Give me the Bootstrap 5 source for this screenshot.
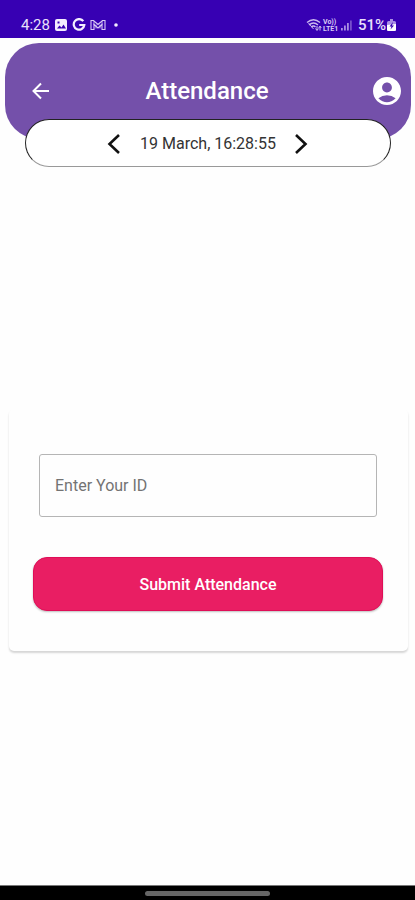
<!DOCTYPE html>
<html lang="en">
<head>
<meta charset="utf-8">
<meta name="viewport" content="width=device-width, initial-scale=1">
<title>Attendance</title>
<link href="https://cdn.jsdelivr.net/npm/bootstrap@5.3.0/dist/css/bootstrap.min.css" rel="stylesheet">
<style>
body { font-family: Roboto, "Liberation Sans", sans-serif; background: #fefefe; }
svg { display: block; flex: none; }
.status-bar { background: #3700b3; height: 38px; padding: 12px 18px 0 21px; font-size: 15px; line-height: 26px; color: #e9e0fb; }
.battery-level { font-weight: 500; }
.status-group { gap: 4px; }
.app-header { background: #7450aa; border-radius: 34px; margin: 5px 4px 0 5px; height: 96px; padding: 0 10px 0 24px; }
.app-title { font-size: 24px; line-height: 32px; font-weight: 500; padding-right: 12px; }
.icon-btn { line-height: 0; }
.date-pill { height: 48px; margin: -20px 24px 0 25px; padding-top: 2px; border: 1px solid #222; border-bottom-color: #999; border-radius: 24px; background: #fff; gap: 13px; font-size: 16px; color: #333; }
.form-panel { border-radius: 5px; margin: 0 7px 0 9px; padding: 45px 25px 40px 24px; background: #fefefe; box-shadow: 0 2px 2px rgba(0,0,0,.16); }
.id-field { margin: 0 6px 40px; }
.id-field > .id-input { height: 63px; border: 1px solid #b5b5b5; border-radius: 3px; padding: 20px 16px 0; font-size: 16px; background: transparent; }
.id-field > .id-label { padding: 0 15px; color: #737373; font-size: 16px; }
.submit-btn, .submit-btn:hover { background: #e91e63; border: 1px solid #e00d57; color: #fff; }
.submit-btn { height: 54px; padding: 8px 12px 6px; border-radius: 14px; font-size: 16px; font-weight: 500; box-shadow: 0 1px 2px rgba(0,0,0,.25); }
.gesture-bar { height: 15px; background: #000; border-top: 1px solid #777; }
.gesture-handle { width: 30%; height: 5px; border-radius: 3px; background: #666; }
</style>
</head>
<body class="d-flex flex-column min-vh-100">
<div class="status-bar d-flex justify-content-between">
  <div class="status-group d-flex align-items-center">
    <span>4:28</span>
    <svg width="14" height="14" viewBox="0 0 14 14" aria-hidden="true"><rect x="1" y="1" width="12" height="12" rx="2" fill="#f3edff"/><path d="M3 10.500l2.500-3 2 2 2-3 2.500 4z" fill="#3700b3"/><path d="M3.500 3.500h2v2h-2z" fill="#3700b3"/></svg>
    <svg width="14" height="14" viewBox="0 0 14 14" aria-hidden="true"><path d="M11.300 3.200A5.300 5.300 0 1 0 12.300 7H7.200" fill="none" stroke="#f3edff" stroke-width="2.200"/></svg>
    <svg width="16" height="14" viewBox="0 0 16 14" aria-hidden="true"><path d="M1 2.500h2.500L8 6.500l4.500-4H15v9h-3V6.500L8 10 4 6.500v5H1z" fill="none" stroke="#d9caf5" stroke-width="1.100"/><path d="M4 3v4M12 3v4M6 6.500v4M10 6.500v4" stroke="#d9caf5" stroke-width=".8"/></svg>
    <svg width="12" height="14" viewBox="0 0 12 14" aria-hidden="true"><circle cx="6" cy="7" r="1.800" fill="#f3edff"/></svg>
  </div>
  <div class="d-flex align-items-center gap-1">
    <svg width="48" height="16" viewBox="0 0 48 16" aria-hidden="true">
      <g fill="none" stroke="#cdbcf0" stroke-width="1.300"><path d="M1 5.500Q7.500 0 14 5.500M3 8Q7.500 4 12 8M5.300 10Q7.500 8 9.500 10"/><path d="M7.500 12l-5-6M11 9v4M9.500 11.500l1.500 2 1.500-2M14 13.500v-4M12.700 11l1.300-2 1.300 2" stroke-width="1"/></g>
      <g fill="#d9caf5" font-family="Roboto, sans-serif" font-size="7" font-weight="700"><text x="17" y="7">Vo))</text><text x="17" y="14">LTE1</text></g>
      <g fill="#a98ee3"><path d="M35 11h1.800v2.500H35zM38 8.500h1.800v5H38zM41 6h1.800v7.500H41z"/><path d="M44 3.500h1.800v10H44z" fill="#7650cc"/></g>
    </svg>
    <span class="battery-level d-flex align-items-center">51%<svg width="11" height="14" viewBox="0 0 11 14" aria-hidden="true"><path d="M4 1h3v2h1.500Q10 3 10 4.500v7Q10 13 8.500 13h-6Q1 13 1 11.500v-7Q1 3 2.500 3H4z" fill="#a98ee3"/><path d="M1 7l9-1v5.500q0 1.500-1.500 1.500h-6Q1 13 1 11.500z" fill="#fff"/><path d="M7 4L3.500 8.500h2L4.500 11.500 8 7.500H6z" fill="#3700b3"/></svg></span>
  </div>
</div>
<main class="flex-grow-1 d-flex flex-column">
  <header class="app-header d-flex align-items-center text-white">
    <button type="button" class="icon-btn btn p-0 border-0 text-white" aria-label="Back"><svg width="24" height="24" viewBox="0 0 24 24"><path d="M20 12H5M12 4.500L4.500 12l7.500 7.500" fill="none" stroke="currentColor" stroke-width="2"/></svg></button>
    <h1 class="app-title flex-grow-1 text-center mb-0">Attendance</h1>
    <button type="button" class="icon-btn btn p-0 border-0 text-white" aria-label="Profile"><svg width="28" height="28" viewBox="2 2 20 20"><path fill="currentColor" d="M12 2C6.480 2 2 6.480 2 12s4.480 10 10 10 10-4.480 10-10S17.520 2 12 2zm0 4c1.930 0 3.500 1.570 3.500 3.500S13.930 13 12 13s-3.500-1.570-3.500-3.500S10.070 6 12 6zm0 14c-2.030 0-4.430-.820-6.140-2.880a9.950 9.950 0 0 1 12.280 0C16.430 19.180 14.030 20 12 20z"/></svg></button>
  </header>
  <div class="date-pill d-flex align-items-center justify-content-center">
    <button type="button" class="icon-btn btn p-0 border-0" aria-label="Previous day"><svg width="24" height="22" viewBox="0 0 24 22"><path d="M16 2L6.500 11l9.500 9" fill="none" stroke="#111" stroke-width="2.600"/></svg></button>
    <span>19 March, 16:28:55</span>
    <button type="button" class="icon-btn btn p-0 border-0" aria-label="Next day"><svg width="24" height="22" viewBox="0 0 24 22"><path d="M7 2l9.500 9L7 20" fill="none" stroke="#111" stroke-width="2.600"/></svg></button>
  </div>
  <div class="my-auto pt-2">
    <form class="form-panel">
      <div class="id-field form-floating">
        <input id="employee-id" type="text" class="form-control id-input" placeholder=" ">
        <label for="employee-id" class="id-label d-flex align-items-center">Enter Your ID</label>
      </div>
      <button type="button" class="submit-btn btn w-100">Submit Attendance</button>
    </form>
  </div>
</main>
<footer class="gesture-bar d-flex align-items-center justify-content-center"><div class="gesture-handle"></div></footer>
<script src="https://cdn.jsdelivr.net/npm/bootstrap@5.3.0/dist/js/bootstrap.bundle.min.js"></script>
</body>
</html>
